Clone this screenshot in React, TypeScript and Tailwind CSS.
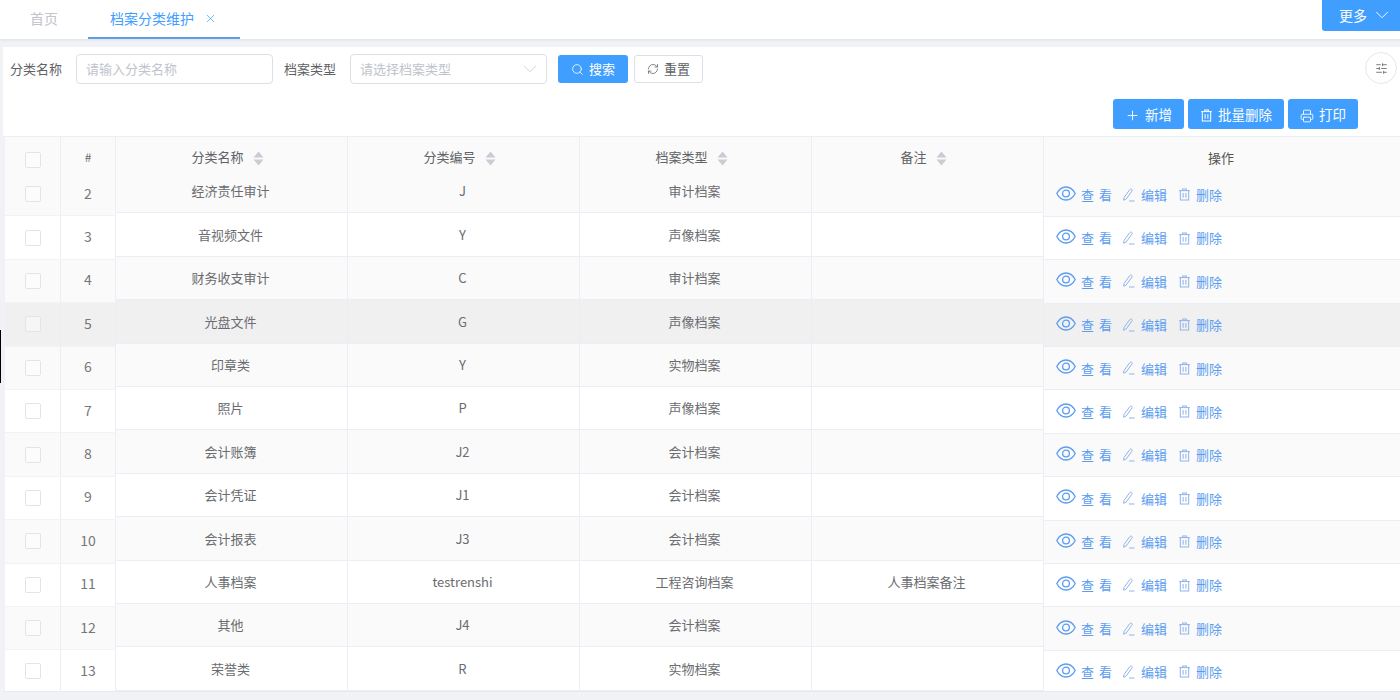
import { ChevronDown, Plus, Printer, RefreshCw, Search, SlidersHorizontal, X } from "lucide-react";

const FONT = "font-['Noto_Sans_CJK_SC','Noto_Sans','Liberation_Sans',sans-serif]";

const rows = [
  { no: 2, name: "经济责任审计", code: "J", type: "审计档案", note: "" },
  { no: 3, name: "音视频文件", code: "Y", type: "声像档案", note: "" },
  { no: 4, name: "财务收支审计", code: "C", type: "审计档案", note: "" },
  { no: 5, name: "光盘文件", code: "G", type: "声像档案", note: "" },
  { no: 6, name: "印章类", code: "Y", type: "实物档案", note: "" },
  { no: 7, name: "照片", code: "P", type: "声像档案", note: "" },
  { no: 8, name: "会计账簿", code: "J2", type: "会计档案", note: "" },
  { no: 9, name: "会计凭证", code: "J1", type: "会计档案", note: "" },
  { no: 10, name: "会计报表", code: "J3", type: "会计档案", note: "" },
  { no: 11, name: "人事档案", code: "testrenshi", type: "工程咨询档案", note: "人事档案备注" },
  { no: 12, name: "其他", code: "J4", type: "会计档案", note: "" },
  { no: 13, name: "荣誉类", code: "R", type: "实物档案", note: "" },
];

function rowBg(no: number) {
  if (no === 5) return "bg-[#f0f0f0]";
  return no % 2 === 0 ? "bg-[#fafafa]" : "bg-white";
}

function SortCaret() {
  return (
    <svg className="ml-[9px] h-[15px] w-[11px]" viewBox="0 0 11 15" fill="#c8ccd3">
      <path d="M5.5 0.5 10.5 6.5H0.5Z" />
      <path d="M0.5 8.5H10.5L5.5 14.5Z" />
    </svg>
  );
}

function EyeIcon() {
  return (
    <svg className="h-[15px] w-[20px]" viewBox="0 0 20 15" fill="none" stroke="#5a9df0" strokeWidth={1.3}>
      <path d="M0.8 7.5C3 3.2 6.2 1 10 1s7 2.2 9.2 6.5C17 11.8 13.8 14 10 14S3 11.8 0.8 7.5Z" />
      <circle cx="10" cy="7.5" r="3.4" />
    </svg>
  );
}

function PenIcon() {
  return (
    <svg className="h-[14px] w-[13px]" viewBox="0 0 13 14" fill="none" stroke="#8fb4ea" strokeWidth={1}>
      <path d="M2 9.5 7.8 1.6c.5-.6 1.2-.7 1.8-.3s.7 1.2.3 1.8L4.2 11 1.6 12.2Z" />
      <path d="M7 13H12.5" />
    </svg>
  );
}

function TrashIcon({ className = "h-[13px] w-[13px]", color = "#8fb4ea" }: { className?: string; color?: string }) {
  return (
    <svg className={className} viewBox="0 0 13 14" fill="none" stroke={color} strokeWidth={1.1}>
      <path d="M0.8 2.8H12.2" />
      <path d="M4.5 2.6V1h4v1.6" />
      <path d="M2 2.8V13h9V2.8" />
      <path d="M5 5.5V10.5M8 5.5V10.5" />
    </svg>
  );
}

function Checkbox() {
  return <span className="h-4 w-4 rounded-[2px] border border-[#e2e4e9] bg-white/40" />;
}

function BlueButton({ icon, label, width }: { icon: React.ReactNode; label: string; width: string }) {
  return (
    <button type="button" className={`flex h-[30px] items-center justify-center gap-[5px] rounded-[3px] bg-[#409eff] text-[13.5px] text-white ${width}`}>
      <span className="mt-[3px]">{icon}</span>
      {label}
    </button>
  );
}

function HeaderCell({ label, width }: { label: string; width: string }) {
  return (
    <div className={`flex h-full items-start justify-center border-r border-[#ebeef5] pr-[8px] pt-[10px] text-[13px] leading-[20px] text-[#606266] ${width}`}>
      {label}
      <span className="mt-[4px]"><SortCaret /></span>
    </div>
  );
}

export default function App() {
  return (
    <div className={`relative h-[700px] w-[1400px] overflow-hidden bg-[#f0f2f5] ${FONT}`}>
      {/* Tabs */}
      <div className="flex h-[39px] items-start justify-between bg-white shadow-[0_1px_3px_rgba(0,0,0,0.08)]">
        <div className="flex h-[39px] items-center">
          <span className="mb-[3px] ml-[30px] w-[58px] text-[14px] text-[#c0c4cc]">首页</span>
          <div className="flex h-[39px] w-[152px] items-center border-b-2 border-[#5b9fe8] pb-[1px] pl-[22px] text-[14px] text-[#409eff]">
            档案分类维护
            <X className="ml-[10px] mt-[1px] h-[13px] w-[13px]" strokeWidth={1.3} />
          </div>
        </div>
        <button type="button" className="flex h-[31px] w-[78px] items-center gap-[4px] rounded-bl-[3px] bg-[#409eff] pb-[1px] pl-[17px] text-[14px] text-white">
          更多
          <ChevronDown className="h-[22px] w-[22px]" strokeWidth={1} />
        </button>
      </div>

      {/* Content */}
      <div className="ml-[3px] mt-[8px] h-[645px] bg-white">
        {/* Search row */}
        <div className="flex h-[44px] items-center pl-[7px] pr-[3px]">
          <span className="w-[53px] text-[13px] text-[#606266]">分类名称</span>
          <div className="ml-[13px] flex h-[30px] w-[197px] items-center rounded-[4px] border border-[#dcdfe6] px-[9px] text-[13px] text-[#c0c4cc]">
            请输入分类名称
          </div>
          <span className="ml-[11px] w-[54px] text-[13px] text-[#606266]">档案类型</span>
          <div className="ml-[12px] flex h-[30px] w-[197px] items-center justify-between rounded-[4px] border border-[#dcdfe6] pl-[9px] pr-[5px] text-[13px] text-[#c0c4cc]">
            请选择档案类型
            <ChevronDown className="h-[22px] w-[22px]" strokeWidth={0.8} />
          </div>
          <button type="button" className="ml-[11px] flex h-[28px] w-[70px] items-center justify-center gap-[5px] rounded-[3px] bg-[#409eff] text-[13px] text-white">
            <Search className="h-[13px] w-[13px]" strokeWidth={1.5} />
            搜索
          </button>
          <button type="button" className="ml-[6px] flex h-[28px] w-[69px] items-center justify-center gap-[5px] rounded-[3px] border border-[#dcdfe6] text-[13px] text-[#606266]">
            <RefreshCw className="h-[12px] w-[12px]" strokeWidth={1.5} />
            重置
          </button>
          <button type="button" className="mb-[2px] ml-auto flex h-[32px] w-[32px] items-center justify-center rounded-full border border-[#e4e7ed] text-[#606266]">
            <SlidersHorizontal className="h-[13px] w-[13px]" strokeWidth={1.5} />
          </button>
        </div>

        {/* Toolbar */}
        <div className="flex h-[45px] items-start justify-end gap-[4px] pr-[42px] pt-[8px]">
          <BlueButton width="w-[71px]" label="新增" icon={<Plus className="h-[15px] w-[15px]" strokeWidth={1.5} />} />
          <BlueButton width="w-[96px]" label="批量删除" icon={<TrashIcon color="white" />} />
          <BlueButton width="w-[70px]" label="打印" icon={<Printer className="h-[14px] w-[14px]" strokeWidth={1.5} />} />
        </div>

        {/* Table */}
        <div className="flex h-[556px] overflow-hidden border-b border-l-2 border-t border-b-[#e6e9ef] border-l-[#f0f2f5] border-t-[#ebeef5] text-[13px] text-[#6a6c70]">
          {/* Fixed left */}
          <div className="w-[111px]">
            <div className="flex h-[36px] bg-[#fafafa]">
              <div className="flex w-[56px] justify-center border-r border-[#ebeef5] pt-[15px]"><Checkbox /></div>
              <div className="w-[55px] border-r border-[#ebeef5] pt-[10px] text-center text-[12px] leading-[20px]">#</div>
            </div>
            {rows.map((row) => (
              <div key={row.no} className={`flex h-[43.4px] border-b border-[#f2f3f7] ${rowBg(row.no)}`}>
                <div className="flex w-[56px] items-center justify-center border-r border-[#ebeef5]"><Checkbox /></div>
                <div className="flex w-[55px] items-center justify-center border-r border-[#ebeef5] pb-[2px] text-[14px] text-[#777]">{row.no}</div>
              </div>
            ))}
          </div>

          {/* Scrolling columns */}
          <div className="w-[928px]">
            <div className="flex h-[33px] bg-[#fafafa]">
              <HeaderCell label="分类名称" width="w-[232px]" />
              <HeaderCell label="分类编号" width="w-[232px]" />
              <HeaderCell label="档案类型" width="w-[232px]" />
              <HeaderCell label="备注" width="w-[232px]" />
            </div>
            {rows.map((row) => (
              <div key={row.no} className={`flex h-[43.4px] border-b border-[#ebeef5] ${rowBg(row.no)}`}>
                {[row.name, row.code, row.type, row.note].map((text, i) => (
                  <div key={i} className="flex w-[232px] items-center justify-center border-r border-[#ebeef5] pr-[2px]">{text}</div>
                ))}
              </div>
            ))}
          </div>

          {/* Fixed right */}
          <div className="flex-1">
            <div className="h-[36.5px] bg-[#fafafa] pr-[2px] pt-[11px] text-center leading-[20px] text-[#555]">操作</div>
            {rows.map((row) => (
              <div key={row.no} className={`flex h-[43.4px] items-center border-b border-[#ebeef5] pl-[12px] ${rowBg(row.no)}`}>
                <span className="mb-[3px]"><EyeIcon /></span>
                <span className="ml-[5px] text-[13px] tracking-[5px] text-[#5a9df0]">查看</span>
                <span className="ml-[5px]"><PenIcon /></span>
                <span className="ml-[6px] text-[#5a9df0]">编辑</span>
                <span className="ml-[11px]"><TrashIcon /></span>
                <span className="ml-[5px] text-[#5a9df0]">删除</span>
              </div>
            ))}
          </div>
        </div>
      </div>

      {/* Cursor sliver at the window edge */}
      <div className="absolute left-0 top-[330px] h-[53px] w-[1px] bg-black" />
    </div>
  );
}
